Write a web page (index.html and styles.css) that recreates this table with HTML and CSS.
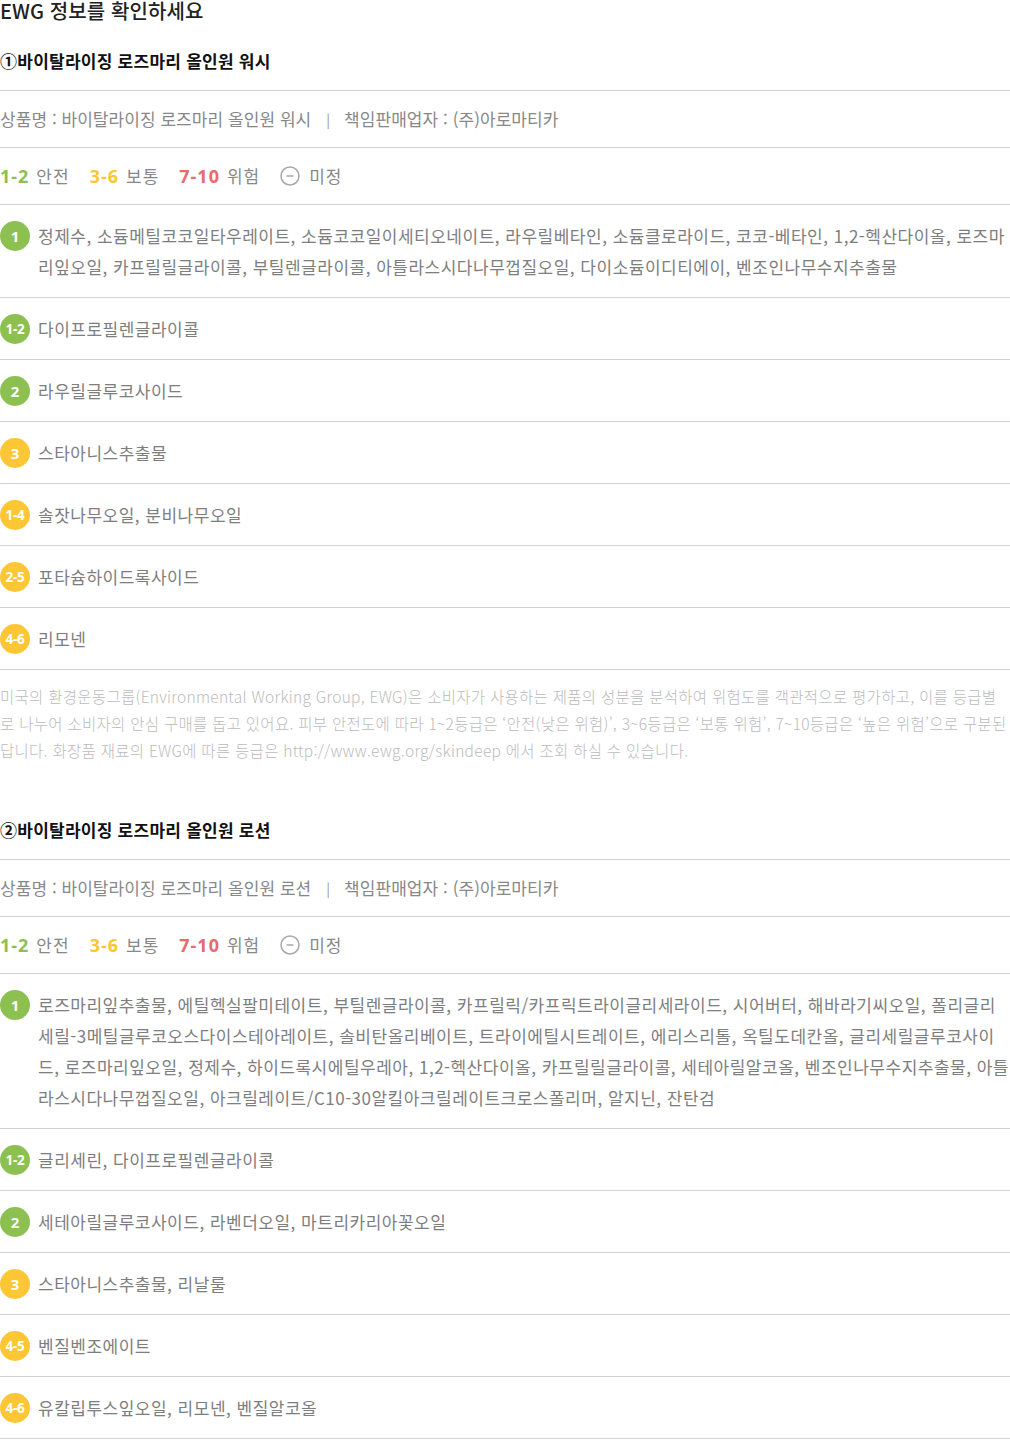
FILE: index.html
```html
<!DOCTYPE html>
<html lang="ko">
<head>
<meta charset="utf-8">
<title>EWG 정보</title>
<link rel="stylesheet" href="styles.css">
</head>
<body>
<div class="page">
  <h2 class="page-title">EWG 정보를 확인하세요</h2>

  <section class="product">
    <h3 class="product-title">①바이탈라이징 로즈마리 올인원 워시</h3>
    <div class="row info">상품명 : 바이탈라이징 로즈마리 올인원 워시<span class="sep">|</span>책임판매업자 : (주)아로마티카</div>
    <div class="row legend">
      <span class="lg-num green">1-2</span><span class="lg-label">안전</span>
      <span class="lg-num yellow">3-6</span><span class="lg-label">보통</span>
      <span class="lg-num red">7-10</span><span class="lg-label">위험</span>
      <svg class="lg-icon" width="20" height="20" viewBox="0 0 20 20"><circle cx="10" cy="10" r="9" fill="none" stroke="#a8a8a8" stroke-width="1.5"/><line x1="6.5" y1="10" x2="13.5" y2="10" stroke="#a8a8a8" stroke-width="1.5"/></svg><span class="lg-label">미정</span>
    </div>
    <div class="ing"><span class="badge green">1</span><p class="ing-text">정제수, 소듐메틸코코일타우레이트, 소듐코코일이세티오네이트, 라우릴베타인, 소듐클로라이드, 코코-베타인, 1,2-헥산다이올, 로즈마리잎오일, 카프릴릴글라이콜, 부틸렌글라이콜, 아틀라스시다나무껍질오일, 다이소듐이디티에이, 벤조인나무수지추출물</p></div>
    <div class="ing"><span class="badge green small">1-2</span><p class="ing-text">다이프로필렌글라이콜</p></div>
    <div class="ing"><span class="badge green">2</span><p class="ing-text">라우릴글루코사이드</p></div>
    <div class="ing"><span class="badge yellow">3</span><p class="ing-text">스타아니스추출물</p></div>
    <div class="ing"><span class="badge yellow small">1-4</span><p class="ing-text">솔잣나무오일, 분비나무오일</p></div>
    <div class="ing"><span class="badge yellow small">2-5</span><p class="ing-text">포타슘하이드록사이드</p></div>
    <div class="ing"><span class="badge yellow small">4-6</span><p class="ing-text">리모넨</p></div>
    <p class="desc">미국의 환경운동그룹(Environmental Working Group, EWG)은 소비자가 사용하는 제품의 성분을 분석하여 위험도를 객관적으로 평가하고, 이를 등급별로 나누어 소비자의 안심 구매를 돕고 있어요. 피부 안전도에 따라 1~2등급은 ‘안전(낮은 위험)’, 3~6등급은 ‘보통 위험’, 7~10등급은 ‘높은 위험’으로 구분된답니다. 화장품 재료의 EWG에 따른 등급은 http://www.ewg.org/skindeep 에서 조회 하실 수 있습니다.</p>
  </section>

  <section class="product second">
    <h3 class="product-title">②바이탈라이징 로즈마리 올인원 로션</h3>
    <div class="row info">상품명 : 바이탈라이징 로즈마리 올인원 로션<span class="sep">|</span>책임판매업자 : (주)아로마티카</div>
    <div class="row legend">
      <span class="lg-num green">1-2</span><span class="lg-label">안전</span>
      <span class="lg-num yellow">3-6</span><span class="lg-label">보통</span>
      <span class="lg-num red">7-10</span><span class="lg-label">위험</span>
      <svg class="lg-icon" width="20" height="20" viewBox="0 0 20 20"><circle cx="10" cy="10" r="9" fill="none" stroke="#a8a8a8" stroke-width="1.5"/><line x1="6.5" y1="10" x2="13.5" y2="10" stroke="#a8a8a8" stroke-width="1.5"/></svg><span class="lg-label">미정</span>
    </div>
    <div class="ing"><span class="badge green">1</span><p class="ing-text">로즈마리잎추출물, 에틸헥실팔미테이트, 부틸렌글라이콜, 카프릴릭/카프릭트라이글리세라이드, 시어버터, 해바라기씨오일, 폴리글리세릴-3메틸글루코오스다이스테아레이트, 솔비탄올리베이트, 트라이에틸시트레이트, 에리스리톨, 옥틸도데칸올, 글리세릴글루코사이드, 로즈마리잎오일, 정제수, 하이드록시에틸우레아, 1,2-헥산다이올, 카프릴릴글라이콜, 세테아릴알코올, 벤조인나무수지추출물, 아틀라스시다나무껍질오일, 아크릴레이트/C10-30알킬아크릴레이트크로스폴리머, 알지닌, 잔탄검</p></div>
    <div class="ing"><span class="badge green small">1-2</span><p class="ing-text">글리세린, 다이프로필렌글라이콜</p></div>
    <div class="ing"><span class="badge green">2</span><p class="ing-text">세테아릴글루코사이드, 라벤더오일, 마트리카리아꽃오일</p></div>
    <div class="ing"><span class="badge yellow">3</span><p class="ing-text">스타아니스추출물, 리날룰</p></div>
    <div class="ing"><span class="badge yellow small">4-5</span><p class="ing-text">벤질벤조에이트</p></div>
    <div class="ing"><span class="badge yellow small">4-6</span><p class="ing-text">유칼립투스잎오일, 리모넨, 벤질알코올</p></div>
  </section>
</div>
</body>
</html>
```

FILE: styles.css
```css
* { box-sizing: border-box; }
html, body { margin: 0; padding: 0; background: #fff; }
body {
  font-family: "Noto Sans CJK KR", "Noto Sans", sans-serif;
  color: #222;
}
.page { width: 1010px; }
.page-title {
  margin: 0;
  font-size: 20px;
  line-height: 22px;
  font-weight: 500;
  color: #222;
  letter-spacing: 0.1px;
}
.product-title {
  margin: 27px 0 0;
  padding-bottom: 17px;
  font-size: 17px;
  line-height: 24px;
  font-weight: 700;
  color: #111;
  letter-spacing: 0.25px;
  border-bottom: 1px solid #d2d2d2;
}
.second .product-title { margin-top: 54px; }
.row {
  height: 57px;
  padding: 16px 0;
  line-height: 24px;
  border-bottom: 1px solid #d2d2d2;
  display: flex;
  align-items: center;
}
.info {
  font-size: 17px;
  color: #888;
  font-weight: 400;
  letter-spacing: 0.05px;
}
.sep { margin: 0 14px 0 15px; color: #999; font-size: 14px; }
.lg-num {
  font-family: "Noto Sans", sans-serif;
  font-weight: 700;
  font-size: 18px;
  letter-spacing: 1px;
  margin-right: 7px;
}
.lg-label {
  font-size: 17px;
  color: #888;
  letter-spacing: 1px;
  margin-right: 20px;
}
.lg-icon { margin-right: 9px; }
.green { color: #8cc152; }
.yellow { color: #fcc634; }
.red { color: #e96a6a; }
.ing {
  display: flex;
  align-items: flex-start;
  gap: 8px;
  padding: 15px 0;
  border-bottom: 1px solid #d2d2d2;
}
.badge {
  flex: 0 0 30px;
  width: 30px;
  height: 30px;
  border-radius: 50%;
  margin-top: 0.5px;
  display: flex;
  align-items: center;
  justify-content: center;
  color: #fff;
  font-family: "Noto Sans", sans-serif;
  font-weight: 700;
  font-size: 15px;
}
.badge.small { font-size: 13.5px; letter-spacing: -0.2px; }
.badge.green { background: #8cc152; }
.badge.yellow { background: #fcc634; }
.ing-text {
  margin: 0;
  font-size: 17px;
  line-height: 31px;
  color: #7e7e7e;
  font-weight: 400;
  letter-spacing: 0.5px;
}
.desc {
  margin: 13px 0 0;
  font-size: 15.5px;
  line-height: 27px;
  color: #bbb;
  font-weight: 300;
  letter-spacing: 0.28px;
}
```
